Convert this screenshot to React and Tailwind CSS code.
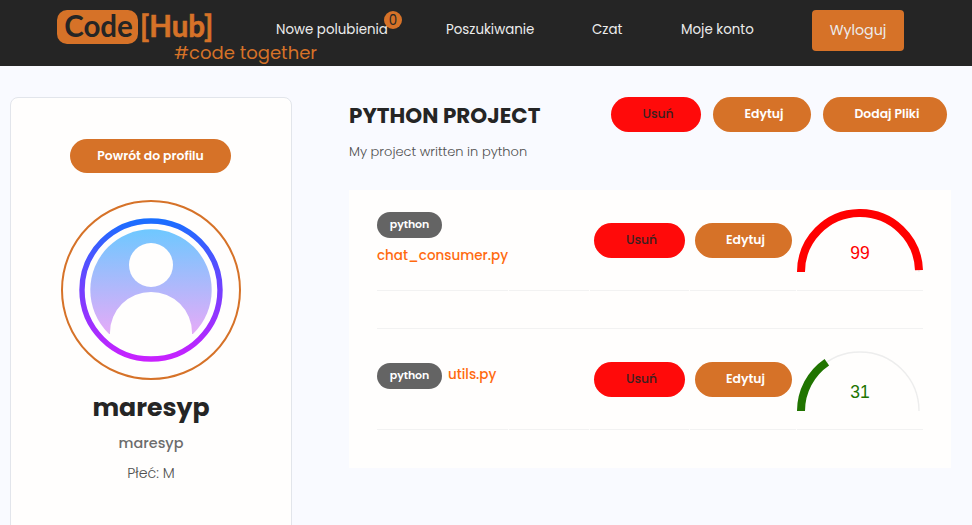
import React from "react";

function Gauge({ value, color }) {
  const angle = Math.PI * (1 - value / 100);
  const x = 63 + 59 * Math.cos(angle);
  const y = 63 - 59 * Math.sin(angle);
  return (
    <svg viewBox="0 0 126 63" className="w-[126px] h-[63px] block">
      <path d="M4 63 A59 59 0 0 1 122 63" fill="none" stroke="#ededed" strokeWidth="1.4" />
      <path d={`M4 63 A59 59 0 0 1 ${x} ${y}`} fill="none" stroke={color} strokeWidth="8" />
      <text x="63" y="50" textAnchor="middle" fill={color} className="font-['Liberation_Sans',sans-serif] text-[17.5px]">
        {value}
      </text>
    </svg>
  );
}

function Avatar() {
  return (
    <div className="size-[180px] rounded-full border-2 border-[#d67228] mt-[27px] shrink-0">
      <svg viewBox="2 2 176 176" className="size-full block">
        <defs>
          <linearGradient id="ring" x1="0" y1="18" x2="0" y2="162" gradientUnits="userSpaceOnUse">
            <stop offset="0" stopColor="#176fff" />
            <stop offset="0.5" stopColor="#743fff" />
            <stop offset="1" stopColor="#cb20ff" />
          </linearGradient>
          <linearGradient id="disc" x1="0" y1="29" x2="0" y2="134" gradientUnits="userSpaceOnUse">
            <stop offset="0" stopColor="#6ec8ff" />
            <stop offset="1" stopColor="#e5abf8" />
          </linearGradient>
        </defs>
        <circle cx="90" cy="90" r="60.7" fill="url(#disc)" />
        <circle cx="90" cy="65" r="22" fill="#fffefd" />
        <path d="M49 134 V132.5 A41 40.5 0 0 1 131 132.5 V134 L140 134 V155 H40 V134 Z" fill="#fffefd" />
        <circle cx="90" cy="90" r="69" fill="none" stroke="url(#ring)" strokeWidth="5.4" />
      </svg>
    </div>
  );
}

function Pill({ children, className }) {
  return (
    <button className={`h-[35px] rounded-full pb-px pl-[4px] text-[12.4px] shrink-0 whitespace-nowrap ${className}`}>
      {children}
    </button>
  );
}

const danger = "bg-[#ff0a0a] text-[#3d2020] font-medium";
const accent = "bg-[#d67228] text-white font-semibold";

function FileRow({ file, value, color, stacked, className }) {
  const cell = "border-b border-[#f2f2f2]";
  return (
    <div className={`grid grid-cols-[131px_80px_99px_106px_126px] gap-x-px ${className}`}>
      <div className={`${cell} whitespace-nowrap ${stacked ? "pt-[3px]" : "pt-[15px] flex items-start"}`}>
        <div className="w-[65px] h-[26px] rounded-full bg-[#646464] text-white text-[11px] font-semibold tracking-[-0.1px] leading-[25px] text-center shrink-0">
          python
        </div>
        <div
          className={`text-[#ff6a0f] font-medium text-[13.5px] leading-5 ${
            stacked ? "mt-[8px]" : "ml-[6px] mt-[2px]"
          }`}
        >
          {file}
        </div>
      </div>
      <div className={cell} />
      <div className={`${cell} pl-1 pt-[14px]`}>
        <Pill className={`w-[91px] ${danger}`}>Usuń</Pill>
      </div>
      <div className={`${cell} pl-[5px] pt-[14px]`}>
        <Pill className={`w-[97px] ${accent}`}>Edytuj</Pill>
      </div>
      <div className={cell}>
        <Gauge value={value} color={color} />
      </div>
    </div>
  );
}

export default function App() {
  return (
    <div className="w-full h-[525px] overflow-hidden bg-[#f9faff] font-['Poppins','Inter',sans-serif] text-[#252525]">
      <header className="h-[66px] bg-[#252525] flex items-start text-[#ececec] whitespace-nowrap">
        <div className="ml-[57px] w-[219px] shrink-0 relative font-['Lato',sans-serif] font-bold text-[29.5px] leading-[32px] flex pt-[10px]">
          <span className="w-[81px] h-[34px] rounded-[10px] bg-[#d67228] text-[#252525] text-center pl-[2px]">Code</span>
          <span className="text-[#d67228] ml-[2px] [-webkit-text-stroke:0.6px_#d67228]">[Hub]</span>
          <span className="absolute left-[117px] top-[40px] font-['Poppins','Inter',sans-serif] font-normal text-[18px] leading-[26px] text-[#d67228]">
            #code together
          </span>
        </div>
        <nav className="flex text-[13.4px] leading-5 pt-[20px]">
          <a className="w-[170px] relative">
            Nowe polubienia
            <span className="absolute left-[108px] -top-[9px] size-[18px] rounded-full bg-[#d67228] text-[#252525] text-[13.4px] leading-[20px] text-center">
              0
            </span>
          </a>
          <a className="w-[146px]">Poszukiwanie</a>
          <a className="w-[89px]">Czat</a>
          <a className="w-[131px]">Moje konto</a>
        </nav>
        <button className="mt-[10px] w-[92px] h-[41px] rounded bg-[#d67228] text-[14.2px]">Wyloguj</button>
      </header>

      <main className="flex items-start pl-[10px] pt-[31px]">
        <aside className="w-[282px] h-[500px] shrink-0 rounded-lg border border-[#e2e5eb] bg-[#fffefd] flex flex-col items-center pt-[41px]">
          <button className="w-[161px] h-[34px] -ml-px shrink-0 rounded-full bg-[#d67228] text-white font-semibold text-[12.4px] whitespace-nowrap">
            Powrót do profilu
          </button>
          <Avatar />
          <h2 className="mt-[11px] text-[25.2px] leading-[34px] font-bold">maresyp</h2>
          <p className="mt-[6px] text-[14.4px] leading-6 font-medium text-[#6c6c6c]">maresyp</p>
          <p className="mt-[6px] text-[14.2px] leading-6 font-light text-[#505050]">Płeć: M</p>
        </aside>

        <section className="ml-[57px] w-[602px]">
          <div className="flex h-[93px] items-start">
            <div className="w-[262px] whitespace-nowrap">
              <h1 className="text-[21.5px] leading-[30px] font-bold mt-[4px]">PYTHON PROJECT</h1>
              <p className="mt-[11px] text-[13px] leading-5 font-light text-[#505050]">My project written in python</p>
            </div>
            <div className="flex gap-3">
              <Pill className={`w-[90px] ${danger}`}>Usuń</Pill>
              <Pill className={`w-[98px] ${accent}`}>Edytuj</Pill>
              <Pill className={`w-[124px] ${accent}`}>Dodaj Pliki</Pill>
            </div>
          </div>
          <div className="h-[278px] bg-[#fffefd] pl-7 pt-[19px]">
            <FileRow file="chat_consumer.py" value={99} color="#ff0000" stacked className="h-[82px]" />
            <div className="w-[546px] h-[38px] border-b border-[#f2f2f2]" />
            <FileRow file="utils.py" value={31} color="#207400" className="h-[82px] mt-[19px]" />
          </div>
        </section>
      </main>
    </div>
  );
}
